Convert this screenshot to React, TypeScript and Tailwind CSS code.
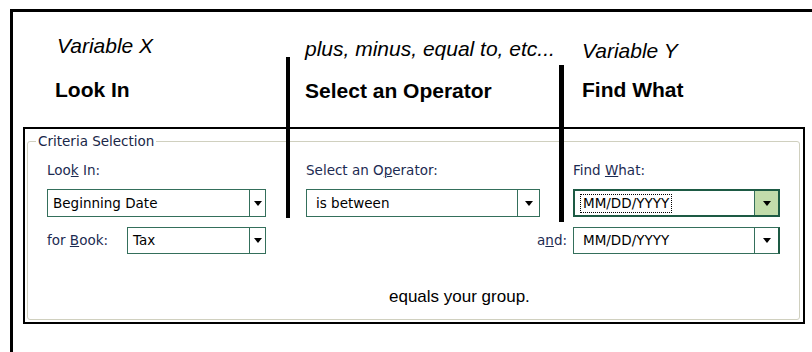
import React from "react";

const Arrow = () => (
  <svg width="8" height="5" viewBox="0 0 8 5">
    <polygon points="0,0 8,0 4,5" fill="#000" />
  </svg>
);

interface ComboProps {
  value: React.ReactNode;
  arrowClass: string;
  className: string;
  focused?: boolean;
}

function Combo(props: ComboProps) {
  const box = props.focused
    ? "border-2 border-[#1d5a44]"
    : "border border-[#346f5b]";
  const btn = props.focused
    ? "border-l border-[#346f5b] bg-[#c2dcab]"
    : "border-l border-[#346f5b] bg-white";
  return (
    <div className={`flex bg-white ${box} ${props.className}`}>
      <div className="flex-1 flex items-center pl-[5px] text-black whitespace-nowrap">
        {props.value}
      </div>
      <div className={`flex items-center justify-center ${btn} ${props.arrowClass}`}>
        <Arrow />
      </div>
    </div>
  );
}

export default function App() {
  return (
    <div className="relative w-[812px] h-[352px] overflow-hidden bg-white pt-[9px] pl-[10px]">
      <div className="h-[343px] border-l-[3px] border-t-[3px] border-black">
        {/* annotations over the dialog */}
        <div className="flex h-[115px] pt-[22px] pl-[44px] font-['Liberation_Sans',Arial,sans-serif] text-[21px] leading-[24px] text-black">
          <div className="w-[248px] flex flex-col">
            <div className="italic">Variable X</div>
            <div className="mt-[20px] -ml-[2px] font-bold">Look In</div>
          </div>
          <div className="w-[277px] flex flex-col pt-[3px]">
            <div className="italic">plus, minus, equal to, etc...</div>
            <div className="mt-[18px] font-bold">Select an Operator</div>
          </div>
          <div className="flex flex-col pt-[5px]">
            <div className="italic">Variable Y</div>
            <div className="mt-[15px] font-bold">Find What</div>
          </div>
        </div>

        {/* dialog */}
        <div className="ml-[10px] w-[782px] h-[197px] border-2 border-black bg-white font-['DejaVu_Sans',sans-serif] text-[13.5px]">
          <fieldset className="ml-[2px] mt-[4px] w-[773px] h-[187px] border border-[#d0d0bf] rounded-[3px]">
            <legend className="ml-[8px] px-[2px] leading-[16px] text-[#1a2748]">
              Criteria Selection
            </legend>

            <div className="flex mt-[13px] pl-[19px] leading-[16px] text-[#1c2b52]">
              <div className="w-[259px]">
                Loo<u>k</u> In:
              </div>
              <div className="w-[267px]">
                Select an O<u>p</u>erator:
              </div>
              <div>
                Find <u>W</u>hat:
              </div>
            </div>

            <div className="flex mt-[11px] pl-[19px]">
              <Combo
                className="w-[219px] h-[28px]"
                arrowClass="w-[16px]"
                value="Beginning Date"
              />
              <Combo
                className="ml-[40px] w-[234px] h-[28px]"
                arrowClass="w-[22px]"
                value={<span className="pl-[4px]">is between</span>}
              />
              <Combo
                focused
                className="ml-[33px] w-[207px] h-[28px]"
                arrowClass="w-[24px]"
                value={
                  <span className="border border-dotted border-black px-[2px] leading-[17px]">
                    MM/DD/YYYY
                  </span>
                }
              />
            </div>

            <div className="flex items-center mt-[10px] pl-[19px] text-[#1c2b52]">
              <div className="w-[80px]">
                for <u>B</u>ook:
              </div>
              <Combo
                className="w-[139px] h-[27px]"
                arrowClass="w-[16px]"
                value="Tax"
              />
              <div className="w-[307px] text-right pr-[6px]">
                a<u>n</u>d:
              </div>
              <Combo
                className="w-[207px] h-[27px] border-r-2 border-r-[#1d5a44]"
                arrowClass="w-[24px]"
                value={<span className="pl-[4px]">MM/DD/YYYY</span>}
              />
            </div>

            <div className="mt-[32px] pl-[361px] font-['Liberation_Sans',Arial,sans-serif] text-[17px] leading-[22px] text-black">
              equals your group.
            </div>
          </fieldset>
        </div>
      </div>

      {/* annotation bars */}
      <div className="absolute left-[286px] top-[57px] w-[4px] h-[161px] bg-black" />
      <div className="absolute left-[559px] top-[65px] w-[5px] h-[157px] bg-black" />
    </div>
  );
}
